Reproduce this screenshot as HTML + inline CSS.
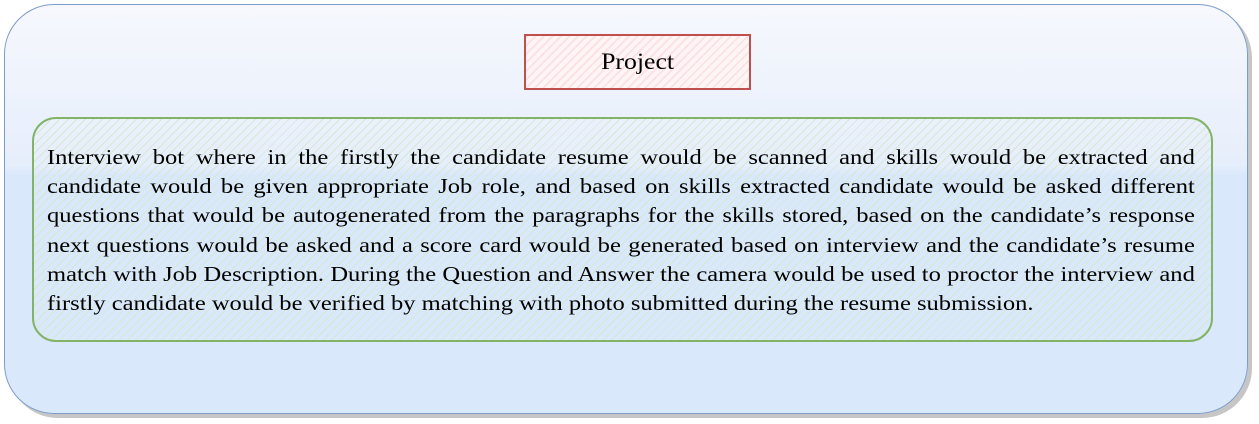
<!DOCTYPE html>
<html><head><meta charset="utf-8"><style>
body{margin:0;width:1259px;height:424px;background:#fff;position:relative;overflow:hidden;font-family:"Liberation Serif",serif}
.outer{position:absolute;left:4px;top:4px;width:1242px;height:408px;border:1.5px solid #7f9cc9;border-radius:50px;
background:linear-gradient(180deg,#f6f8fd 0px,#e6eefb 160px,#dae8fc 170px,#dae8fc 100%);box-shadow:4px 4px 0 #c6c6c6}
.proj{position:absolute;left:524px;top:34px;width:227px;height:56px;border:2px solid #c0504d;box-sizing:border-box;
background:repeating-linear-gradient(135deg,#fbe3e3 0 2px,#fff5f5 2px 6px);font-size:23px;display:flex;align-items:center;justify-content:center}
.proj span{display:inline-block;transform:scaleX(1.12)}
.green{position:absolute;left:32px;top:117px;width:1181px;height:225px;border:2px solid #82b366;box-sizing:border-box;border-radius:24px;
background:repeating-linear-gradient(135deg,#d5e8d4 0 1px,transparent 1px 6px)}
.txt{position:absolute;left:47px;top:143px;width:1006px;font-size:21.5px;line-height:29.2px;color:#000;transform:scaleX(1.141);transform-origin:0 0}
.txt div{text-align:justify;text-align-last:justify;white-space:nowrap}
.txt div.l{text-align-last:left}
</style></head><body>
<div class="outer"></div>
<div class="proj"><span>Project</span></div>
<div class="green"></div>
<div class="txt">
<div>Interview bot where in the firstly the candidate resume would be scanned and skills would be extracted and</div>
<div>candidate would be given appropriate Job role, and based on skills extracted candidate would be asked different</div>
<div>questions that would be autogenerated from the paragraphs for the skills stored, based on the candidate’s response</div>
<div>next questions would be asked and a score card would be generated based on interview and the candidate’s resume</div>
<div>match with Job Description. During the Question and Answer the camera would be used to proctor the interview and</div>
<div class="l">firstly candidate would be verified by matching with photo submitted during the resume submission.</div>
</div>
</body></html>
